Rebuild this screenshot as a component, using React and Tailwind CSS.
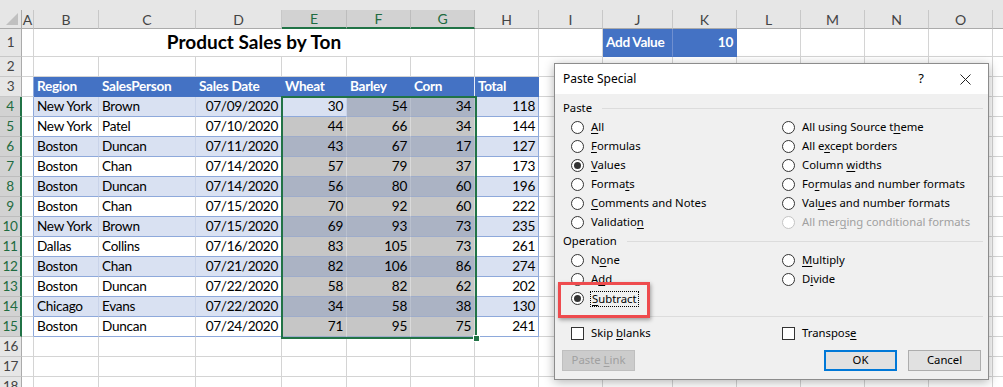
import React from "react";

const COLS = [
  ["A", "w-[12px]"],
  ["B", "w-[65px]"],
  ["C", "w-[97px]"],
  ["D", "w-[86px]"],
  ["E", "w-[65px]"],
  ["F", "w-[64px]"],
  ["G", "w-[64px]"],
  ["H", "w-[64px]"],
  ["I", "w-[64px]"],
  ["J", "w-[70px]"],
  ["K", "w-[64px]"],
  ["L", "w-[64px]"],
  ["M", "w-[64px]"],
  ["N", "w-[64px]"],
  ["O", "w-[64px]"],
  ["P", "w-[64px]"],
];

const SEL = ["E", "F", "G"];

const DATA = [
  ["New York", "Brown", "07/09/2020", 30, 54, 34, 118],
  ["New York", "Patel", "07/10/2020", 44, 66, 34, 144],
  ["Boston", "Duncan", "07/11/2020", 43, 67, 17, 127],
  ["Boston", "Chan", "07/14/2020", 57, 79, 37, 173],
  ["Boston", "Duncan", "07/14/2020", 56, 80, 60, 196],
  ["Boston", "Chan", "07/15/2020", 70, 92, 60, 222],
  ["New York", "Brown", "07/15/2020", 69, 93, 73, 235],
  ["Dallas", "Collins", "07/16/2020", 83, 105, 73, 261],
  ["Boston", "Chan", "07/21/2020", 82, 106, 86, 274],
  ["Boston", "Duncan", "07/22/2020", 58, 82, 62, 202],
  ["Chicago", "Evans", "07/22/2020", 34, 58, 38, 130],
  ["Boston", "Duncan", "07/24/2020", 71, 95, 75, 241],
];

const HEADS = ["Region", "SalesPerson", "Sales Date", "Wheat", "Barley", "Corn", "Total"];
const TABLE_COLS = ["B", "C", "D", "E", "F", "G", "H"];

function cell(r, col) {
  let bg = "bg-white";
  let br = "border-r-[#d4d4d4]";
  let bb = "border-b-[#d4d4d4]";
  let text = "";
  let align = "justify-start pl-[3px]";
  let content = null;
  const ti = TABLE_COLS.indexOf(col);

  if (r === 1 && col === "J") {
    bg = "bg-[#4472c4]";
    br = "border-r-[#6f8fd0]";
    bb = "border-b-[#4472c4]";
    text = "text-white font-bold";
    content = "Add Value";
  }
  if (r === 1 && col === "K") {
    bg = "bg-[#4472c4]";
    br = "border-r-[#4472c4]";
    bb = "border-b-[#4472c4]";
    text = "text-white font-bold";
    align = "justify-end pr-[3px]";
    content = "10";
  }
  if (r >= 3 && r <= 15 && col === "A") br = "border-r-[#8ea9db]";

  if (r === 3 && ti >= 0) {
    bg = "bg-[#4472c4]";
    br = col === "G" ? "border-r-[#e8edf7]" : "border-r-[#4472c4]";
    bb = "border-b-[#4472c4]";
    text = "text-white font-bold";
    content = HEADS[ti];
  }

  if (r >= 4 && r <= 15 && ti >= 0) {
    const i = r - 4;
    const blue = i % 2 === 0;
    const row = DATA[i];
    content = row[ti];
    bb = "border-b-[#8ea9db]";
    if (ti >= 2) align = "justify-end pr-[3px]";
    if (SEL.includes(col) && !(r === 4 && col === "E")) {
      bg = blue ? "bg-[#abb3c4]" : "bg-[#c6c6c6]";
      br = blue ? "border-r-[#b9c0ce]" : "border-r-[#dadada]";
      bb = "border-b-[#9eacca]";
    } else {
      bg = blue ? "bg-[#d9e1f2]" : "bg-white";
      br = blue ? "border-r-[#c9d3e9]" : "border-r-[#d4d4d4]";
    }
    if (col === "H") br = "border-r-[#8ea9db]";
  }

  return { cls: `${bg} ${br} ${bb} ${text} ${align}`, content };
}

function RowHead({ n, h }) {
  const sel = n >= 4 && n <= 15;
  return (
    <div
      className={`w-[22px] shrink-0 ${h} flex items-center justify-center border-b ${
        sel
          ? "bg-[#d2d2d2] text-[#1e6b41] border-b-[#bdbdbd] border-r-2 border-r-[#217346]"
          : "bg-[#e6e6e6] text-[#444] border-b-[#c8c8c8] border-r border-r-[#ababab]"
      }`}
    >
      {n}
    </div>
  );
}

function SheetRow({ n }) {
  const h = n === 1 ? "h-[28px]" : "h-[20px]";
  return (
    <div className={`flex ${h}`}>
      <RowHead n={n} h={h} />
      {COLS.map(([col, w]) => {
        if (n === 1 && col === "B") {
          return (
            <div
              key={col}
              className="w-[441px] shrink-0 h-full flex items-center justify-center border-r border-b border-[#d4d4d4] font-bold text-[19px] tracking-normal"
            >
              Product Sales by Ton
            </div>
          );
        }
        if (n === 1 && ["C", "D", "E", "F", "G"].includes(col)) return null;
        const c = cell(n, col);
        return (
          <div
            key={col}
            className={`${w} shrink-0 h-full flex items-center overflow-hidden whitespace-nowrap border-r border-b ${c.cls}`}
          >
            {c.content}
          </div>
        );
      })}
    </div>
  );
}

function Sheet() {
  const rows = Array.from({ length: 18 }, (_, i) => i + 1);
  return (
    <div className="font-[Lato,sans-serif] text-[13.6px] tracking-[-0.3px] text-black">
      <div className="h-[10px] bg-[#e6e6e6]" />
      <div className="flex h-[19px] bg-[#e6e6e6] text-[#444] text-[14px] tracking-normal">
        <div className="w-[22px] shrink-0 h-full relative border-r border-b border-[#ababab]">
          <div className="absolute right-[3px] bottom-[3px] w-0 h-0 border-l-[12px] border-l-transparent border-b-[12px] border-b-[#c0c0c0]" />
        </div>
        {COLS.map(([col, w]) => {
          const sel = SEL.includes(col);
          return (
            <div
              key={col}
              className={`${w} shrink-0 h-full flex items-center justify-center border-r ${
                sel
                  ? "bg-[#d2d2d2] text-[#1e6b41] border-r-[#bdbdbd] border-b-2 border-b-[#217346]"
                  : "border-r-[#c8c8c8] border-b border-b-[#ababab]"
              }`}
            >
              {col === "P" ? "" : col}
            </div>
          );
        })}
      </div>
      {rows.map((n) => (
        <SheetRow key={n} n={n} />
      ))}
    </div>
  );
}

function Radio({ on, disabled }) {
  return (
    <span
      className={`w-[13px] h-[13px] shrink-0 rounded-full border bg-white flex items-center justify-center ${
        disabled ? "border-[#c4c4c4]" : "border-[#333]"
      }`}
    >
      {on && <span className="w-[7px] h-[7px] rounded-full bg-[#333]" />}
    </span>
  );
}

function Label({ parts, disabled }) {
  const [a, k, b] = parts;
  return (
    <span className={disabled ? "text-[#a0a0a0]" : ""}>
      {a}
      <span className="underline underline-offset-2">{k}</span>
      {b}
    </span>
  );
}

function RadioRow({ parts, on, disabled, focus }) {
  return (
    <div className="h-[19px] flex items-center">
      <Radio on={on} disabled={disabled} />
      {focus ? (
        <span className="ml-[6px] border border-dotted border-black px-px leading-[14px]">
          <Label parts={parts} />
        </span>
      ) : (
        <span className="ml-[7px]">
          <Label parts={parts} disabled={disabled} />
        </span>
      )}
    </div>
  );
}

function Group({ label }) {
  return (
    <div className="h-[19px] flex items-center">
      <span>{label}</span>
      <div className="flex-1 h-px bg-[#dcdcdc] ml-[10px]" />
    </div>
  );
}

const PASTE_LEFT = [
  [["", "A", "ll"]],
  [["", "F", "ormulas"]],
  [["", "V", "alues"], true],
  [["Forma", "t", "s"]],
  [["", "C", "omments and Notes"]],
  [["Validatio", "n", ""]],
];
const PASTE_RIGHT = [
  [["All using Source t", "h", "eme"]],
  [["All e", "x", "cept borders"]],
  [["Column ", "w", "idths"]],
  [["Fo", "r", "mulas and number formats"]],
  [["Val", "u", "es and number formats"]],
  [["All mer", "g", "ing conditional formats"], false, true],
];

function Checkbox({ parts }) {
  return (
    <div className="h-[19px] flex items-center">
      <span className="w-[13px] h-[13px] shrink-0 border border-[#333] bg-white" />
      <span className="ml-[7px]">
        <Label parts={parts} />
      </span>
    </div>
  );
}

function Dialog() {
  return (
    <div className="absolute left-[554px] top-[63px] w-[435px] h-[317px] border border-[#8c8c8c] bg-[#f0f0f0] shadow-[0_2px_10px_rgba(0,0,0,0.3)] font-['Noto_Sans',sans-serif] text-[11.3px] text-black">
      <div className="h-[30px] bg-white flex items-center pl-[8px]">
        <span className="text-[12px]">Paste Special</span>
        <span className="ml-auto text-[13px]">?</span>
        <svg className="ml-[36px] mr-[17px]" width="11" height="11" viewBox="0 0 11 11">
          <path d="M0.5 0.5 L10.5 10.5 M10.5 0.5 L0.5 10.5" stroke="#222" strokeWidth="1" />
        </svg>
      </div>
      <div className="pt-[5px] pl-[8px] pr-[5px]">
        <Group label="Paste" />
        <div className="grid grid-cols-[211px_1fr] pl-[8px]">
          <div>
            {PASTE_LEFT.map(([p, on], i) => (
              <RadioRow key={i} parts={p} on={on} />
            ))}
          </div>
          <div>
            {PASTE_RIGHT.map(([p, on, dis], i) => (
              <RadioRow key={i} parts={p} on={on} disabled={dis} />
            ))}
          </div>
        </div>
        <Group label="Operation" />
        <div className="grid grid-cols-[211px_1fr] pl-[8px]">
          <div>
            <RadioRow parts={["N", "o", "ne"]} />
            <RadioRow parts={["A", "d", "d"]} />
            <RadioRow parts={["", "S", "ubtract"]} on focus />
          </div>
          <div>
            <RadioRow parts={["", "M", "ultiply"]} />
            <RadioRow parts={["D", "i", "vide"]} />
          </div>
        </div>
        <div className="mt-[8px] h-px bg-[#dcdcdc]" />
        <div className="grid grid-cols-[211px_1fr] pl-[8px] mt-[7px]">
          <Checkbox parts={["Skip ", "b", "lanks"]} />
          <Checkbox parts={["Transpos", "e", ""]} />
        </div>
      </div>
      <div className="flex mt-[7px] pl-[7px] pr-[7px]">
        <div className="w-[73px] h-[21px] border border-[#bfbfbf] bg-[#cccccc] text-[#a0a0a0] flex items-center justify-center">
          <span>
            Paste <span className="underline underline-offset-2">L</span>ink
          </span>
        </div>
        <div className="ml-auto w-[73px] h-[21px] border-2 border-[#0078d7] bg-[#e1e1e1] flex items-center justify-center">
          OK
        </div>
        <div className="ml-[11px] w-[73px] h-[21px] border border-[#adadad] bg-[#e1e1e1] flex items-center justify-center">
          Cancel
        </div>
      </div>
      <div className="absolute left-[3px] top-[218px] w-[92px] h-[36px] border-[3px] border-[#ee4b4e] shadow-[1px_2px_4px_rgba(0,0,0,0.35)]" />
    </div>
  );
}

export default function App() {
  return (
    <div className="relative w-[1003px] h-[387px] overflow-hidden bg-white">
      <Sheet />
      <div className="absolute left-[281px] top-[96px] w-[196px] h-[243px] border-2 border-[#217346]" />
      <div className="absolute left-[473px] top-[335px] w-[7px] h-[7px] bg-[#217346] border border-white" />
      <Dialog />
    </div>
  );
}
